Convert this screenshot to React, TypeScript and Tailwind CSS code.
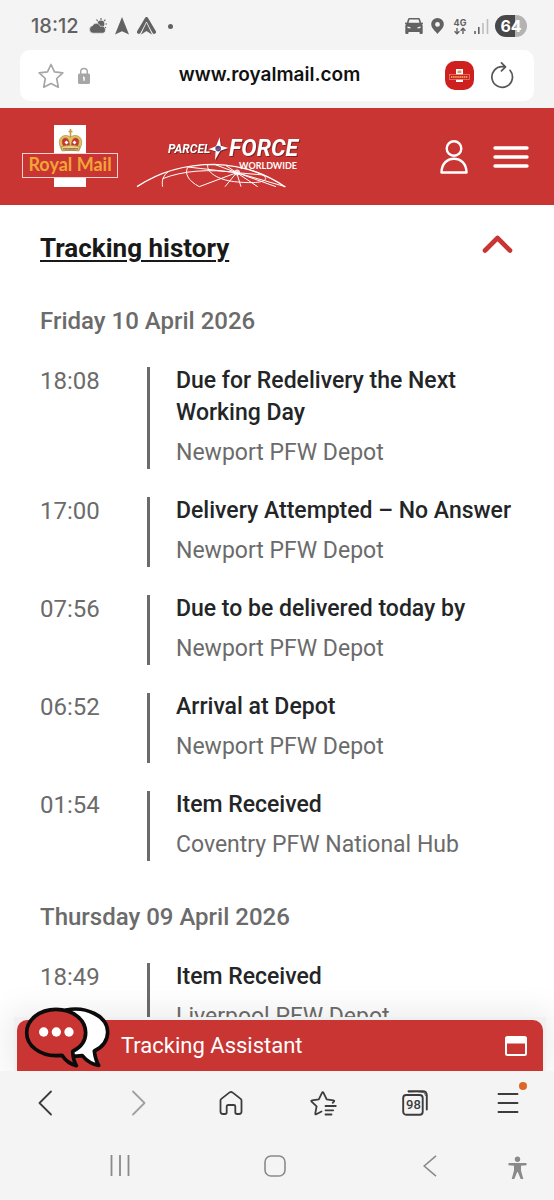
import React from "react";

type TrackingEvent = { time: string; title: string; place: string };
type TrackingDay = { date: string; events: TrackingEvent[] };

const days: TrackingDay[] = [
  {
    date: "Friday 10 April 2026",
    events: [
      { time: "18:08", title: "Due for Redelivery the Next Working Day", place: "Newport PFW Depot" },
      { time: "17:00", title: "Delivery Attempted – No Answer", place: "Newport PFW Depot" },
      { time: "07:56", title: "Due to be delivered today by", place: "Newport PFW Depot" },
      { time: "06:52", title: "Arrival at Depot", place: "Newport PFW Depot" },
      { time: "01:54", title: "Item Received", place: "Coventry PFW National Hub" },
    ],
  },
  {
    date: "Thursday 09 April 2026",
    events: [{ time: "18:49", title: "Item Received", place: "Liverpool PFW Depot" }],
  },
];

function StatusBar() {
  return (
    <div className="flex h-[50px] shrink-0 items-center justify-between pl-[31px] pr-[27px] pt-0.5 text-[#626262]">
      <div className="flex items-center">
        <span className="font-['Inter',sans-serif] text-xl font-medium">18:12</span>
        <svg className="ml-2.5" width="18" height="16" viewBox="0 0 18 16" fill="currentColor" aria-hidden="true">
          <circle cx="12" cy="6" r="3.4" />
          <path d="M12 0v2M7.500 1.500l1.200 1.600M16.400 1.600l-1.300 1.600M18 6h-1.600M17 10l-1-.8" stroke="currentColor" strokeWidth="1.100" />
          <path d="M4 15.200a3.800 3.800 0 0 1-.5-7.500A4.300 4.300 0 0 1 11.500 8.500a3.400 3.400 0 0 1 2.600 6.700z" stroke="#f4f4f4" strokeWidth=".6" />
        </svg>
        <svg className="ml-2" width="14" height="18" viewBox="0 0 14 18" fill="currentColor" aria-hidden="true">
          <path d="M7 0l7 17.500-7-3.300-7 3.300z" />
        </svg>
        <svg className="ml-2" width="19" height="19" viewBox="0 0 19 19" aria-hidden="true">
          <path d="M9.500 2L1.800 15M9.500 2l7.700 13" stroke="currentColor" strokeWidth="3.600" strokeLinecap="round" strokeLinejoin="round" />
          <path d="M9.500 5L16 18.500l-6.500-4-6.500 4z" fill="currentColor" stroke="#f4f4f4" strokeWidth=".8" />
        </svg>
        <span className="ml-3 size-[5px] rounded-full bg-[#626262]" />
      </div>
      <div className="flex items-center">
        <svg width="18" height="16" viewBox="0 0 18 16" fill="currentColor" aria-hidden="true">
          <path
            fillRule="evenodd"
            d="M4.300 0h9.400q1 0 1.300 1l1.200 3.800 1.100-.2q.7 0 .7.700t-.9 1.200q.6.600.6 1.600V15q0 1-1 1h-1.200q-1 0-1-1v-1H3.500v1q0 1-1 1H1.300q-1 0-1-1V8.100q0-1 .6-1.600Q0 6 0 5.300t.7-.7l1.100.2L3 1Q3.300 0 4.300 0zM4.500 1.400L3.500 4.800h11l-1-3.400zM2.500 8.500v1.600l3 .5V9.300zM15.500 8.500v1.600l-3 .5V9.300z"
          />
        </svg>
        <svg className="ml-2" width="13" height="16" viewBox="0 0 13 16" aria-hidden="true">
          <path fill="currentColor" fillRule="evenodd" d="M6.500 0A6.300 6.300 0 0 1 12.800 6.300C12.800 10.500 8 13.500 6.500 16 5 13.500.2 10.500.2 6.300A6.300 6.300 0 0 1 6.500 0zm0 4a2.400 2.400 0 1 0 0 4.800 2.400 2.400 0 0 0 0-4.800z" />
        </svg>
        <div className="ml-2 flex w-4 flex-col items-center">
          <span className="font-['Inter',sans-serif] text-[9px] leading-[9px] font-bold">4G</span>
          <svg width="12" height="8" viewBox="0 0 12 8" fill="none" stroke="currentColor" strokeWidth="1.400" aria-hidden="true">
            <path d="M3 1v5.500M.6 4.300L3 6.800l2.400-2.500M9 7V1.500M6.600 3.700L9 1.200l2.400 2.500" />
          </svg>
        </div>
        <svg className="ml-1.5" width="15" height="15" viewBox="0 0 15 15" aria-hidden="true">
          <path d="M1 12v3M4.800 8v7" stroke="currentColor" strokeWidth="1.600" />
          <path d="M9 4v11M13.500 0v15" stroke="#bdbdbd" strokeWidth="1.600" />
        </svg>
        <span className="ml-1.5 flex h-[22px] w-8 items-center justify-center rounded-full bg-linear-to-r from-[#484848] from-62% to-[#b3b3b3] to-62% font-['Inter',sans-serif] text-base font-bold text-white">
          64
        </span>
      </div>
    </div>
  );
}

function AddressBar() {
  return (
    <div className="mx-5 flex h-[51px] shrink-0 items-center rounded-[10px] bg-white pl-[18px] pr-5">
      <button aria-label="Bookmark" className="text-[#a6a6a6]">
        <svg width="26" height="26" viewBox="0 0 26 26" fill="none" stroke="currentColor" strokeWidth="1.700" strokeLinejoin="round">
          <path d="M13 1.500l3.500 7.300 8.300 1-6.100 5.700 1.600 8.700-7.300-3.800-7.300 3.800 1.600-8.700L1.200 9.800l8.300-1z" />
        </svg>
      </button>
      <svg className="ml-3.5" width="12" height="18" viewBox="0 0 12 18" aria-hidden="true">
        <path d="M2.700 8V4.800a3.300 3.300 0 0 1 6.600 0V8" fill="none" stroke="#a6a6a6" strokeWidth="1.400" />
        <rect y="6.500" width="12" height="10.500" rx="1.500" fill="#a6a6a6" />
        <path d="M6 10v3.800M5 10.300h1" stroke="#fff" strokeWidth="1.500" />
      </svg>
      <input
        aria-label="Web address"
        defaultValue="www.royalmail.com"
        className="mx-3 min-w-0 flex-1 bg-transparent pl-1 text-center font-['Inter',sans-serif] text-[19px] font-semibold text-[#111] outline-none"
      />
      <svg width="29" height="29" viewBox="0 0 29 29" aria-hidden="true">
        <rect width="29" height="29" rx="10" fill="#cf2020" />
        <path d="M11 8h7v13h-7z" fill="#fff" />
        <path d="M12.500 12l.2-2.500h3.600l.2 2.500z" fill="#c9a070" />
        <rect x="4.500" y="13.500" width="20" height="5" fill="#cf2020" stroke="#e58a80" strokeWidth=".7" />
        <path d="M6 16h17" stroke="#eb9a4b" strokeWidth="2" strokeDasharray="1.500 .6" />
      </svg>
      <button aria-label="Reload" className="ml-4 text-[#555]">
        <svg width="24" height="28" viewBox="0 0 24 28" fill="none" stroke="currentColor" strokeWidth="1.700" strokeLinecap="round" strokeLinejoin="round">
          <path d="M20 8.300A10.300 10.300 0 1 1 12.500 4.700h2.500M11.500 .9l4 3.900-4 4" />
        </svg>
      </button>
    </div>
  );
}

function RoyalMailLogo() {
  return (
    <svg width="97" height="64" viewBox="0 0 97 64" role="img" aria-label="Royal Mail">
      <path d="M32 0h32v62H32z" fill="#fff" />
      <g stroke="#8a6a34" strokeWidth=".5">
        <path d="M40 25.500C36 19 36.500 13 41 11c3-1.200 6-.5 7.500 1.500C50 10.500 53 9.800 56 11c4.500 2 5 8 1 14.500z" fill="#e3bf59" />
        <path d="M41.500 21c-2.500-4-1.500-8 2-8 2.500 0 4 3 4 7.500zM55.500 21c2.500-4 1.500-8-2-8-2.500 0-4 3-4 7.500z" fill="#cf2f35" />
        <path d="M39.500 21.500q9-2.500 18 0l-.7 4.500q-8.300-1.800-16.600 0z" fill="#ecd27c" />
      </g>
      <path d="M48.500 4v8M46.500 6.500h4" stroke="#c99a3c" strokeWidth="1.600" />
      <path d="M42.500 17.500l2-2 2 2-2 2zM50.500 17.500l2-2 2 2-2 2z" fill="#fff" />
      <path d="M41 23.800h15" stroke="#4f8b5b" strokeWidth="1.200" strokeDasharray="2 2" />
      <path d="M43 23.800h13" stroke="#c53a34" strokeWidth="1.200" strokeDasharray="2 2" />
      <rect x=".5" y="28.500" width="95" height="24" fill="#c83532" stroke="#f6d3d0" />
      <text x="48" y="46" textAnchor="middle" className="font-['Lato',sans-serif] text-[18px] font-bold" fill="#f2a535">
        Royal Mail
      </text>
    </svg>
  );
}

function ParcelforceLogo() {
  return (
    <svg width="170" height="56" viewBox="0 0 170 56" role="img" aria-label="Parcelforce Worldwide">
      <g transform="translate(-4 -14) scale(.3333)" fill="none" stroke="#fff" strokeWidth="3">
        <path d="M18 200C90 152 170 133 250 133c80 2 150 25 213 68" strokeWidth="4" />
        <path d="M95 200c-4-18 2-34 17-45M170 142c-9 18 0 40 35 58M230 135c-3 22 30 44 80 50 50 5 88 4 94-8 3-10-30-24-64-32" />
        <path d="M95 176c60-24 140-30 222-18M317 158L205 200M317 158l-35 42M317 158l13 42M317 158l63 42M317 158l118 42M317 158l146 42M317 158l-147-17M317 158l-67-25M317 158l-32-21M317 158l80 7" />
      </g>
      <circle cx="102" cy="38.500" r="3" fill="#fff" opacity=".8" />
      <g className="font-['Roboto',sans-serif] font-bold italic drop-shadow-[1px_1px_0_#7c2320]" fill="#fff">
        <text x="33" y="19" className="text-[12px]">PARCEL</text>
        <text x="94" y="22" className="text-[23px]">FORCE</text>
      </g>
      <text x="162" y="35" textAnchor="end" className="font-['Lato',sans-serif] text-[9px] font-bold" fill="#fff">
        WORLDWIDE
      </text>
      <path d="M84.700 3.300l1.100 8.500 7.500 2.200-7.900 2.800L80 26l.6-8.800-7.100-1.900 7.500-3.100z" fill="#fff" className="drop-shadow-[1px_1px_0_#7c2320]" />
      <circle cx="83.200" cy="14.600" r="2.800" fill="#4b4f92" />
      <path d="M81.500 15.500q2 1.500 3.500-1.500" stroke="#d34c50" fill="none" />
    </svg>
  );
}

function SiteHeader() {
  return (
    <header className="mt-[7px] flex h-[97px] shrink-0 items-center bg-[#c83532] pl-[22px] pr-[25px]">
      <a href="#royal-mail"><RoyalMailLogo /></a>
      <a href="#parcelforce" className="ml-4 mt-2.5"><ParcelforceLogo /></a>
      <button aria-label="Account" className="ml-auto">
        <svg width="28" height="34" viewBox="0 0 28 34" fill="none" stroke="#fff" strokeWidth="2.400" strokeLinejoin="round">
          <circle cx="14" cy="8.500" r="7.300" />
          <path d="M1.500 32.500C1.500 24 7 18.700 14 18.700S26.500 24 26.500 32.500z" />
        </svg>
      </button>
      <button aria-label="Menu" className="ml-[25px]">
        <svg width="36" height="24" viewBox="0 0 36 24" stroke="#fff" strokeWidth="3.400" strokeLinecap="round">
          <path d="M2 3h32M2 12h32M2 21h32" />
        </svg>
      </button>
    </header>
  );
}

function EventRow({ event }: { event: TrackingEvent }) {
  return (
    <li className="flex gap-[27px]">
      <time className="w-20 shrink-0 text-[24px] leading-7 text-[#6b6b6b]">{event.time}</time>
      <div className="flex-1 border-l-[3px] border-[#6b6b6b] pl-[26px] text-[23px]">
        <h3 className="-mt-0.5 font-medium text-[#232527]">{event.title}</h3>
        <p className="mt-2 text-[#6b6b6b]">{event.place}</p>
      </div>
    </li>
  );
}

function TrackingHistory() {
  return (
    <section className="pl-10 pr-6 pt-[27px] font-['Roboto',sans-serif] text-[24px] leading-8">
      <button className="flex w-full items-center justify-between pr-[17px] text-left">
        <span className="text-[26px] font-bold text-[#191919] underline decoration-2 underline-offset-3">Tracking history</span>
        <svg className="-mt-2" width="31" height="20" viewBox="0 0 31 20" fill="none" stroke="#c83532" strokeWidth="4.600" strokeLinecap="round" strokeLinejoin="round" aria-hidden="true">
          <path d="M3 16.500L15.500 4 28 16.500" />
        </svg>
      </button>
      <div className="mt-[41px] flex flex-col gap-10">
        {days.map((day) => (
          <div key={day.date}>
            <h2 className="font-medium text-[#6b6b6b]">{day.date}</h2>
            <ol className="mt-[30px] flex flex-col gap-7">
              {day.events.map((event) => (
                <EventRow key={event.time} event={event} />
              ))}
            </ol>
          </div>
        ))}
      </div>
    </section>
  );
}

function AssistantBar() {
  return (
    <div className="absolute right-2 bottom-0 left-3.5 bg-[#f0f0f0] px-[3px] pt-[3px] shadow-[0_0_32px_6px_rgba(0,0,0,0.08)]">
      <button className="relative flex h-[51px] w-full items-center justify-between rounded-t-[10px] bg-[#c83532] pl-[104px] pr-4 font-['Roboto',sans-serif] text-[22px] text-white">
        <svg className="absolute -top-3.5 left-[7px]" width="86" height="62" viewBox="72 48 258 186" stroke="#0b0b0b" strokeWidth="11" strokeLinejoin="round" aria-hidden="true">
          <path d="M198 60c60-12 125 18 125 66 0 27-17 46-40 57 2 17 6 31 13 43-20-3-36-13-49-29-42 6-84-10-84-66z" fill="#fff" />
          <path d="M168 58c50 0 89 31 89 70 0 25-15 44-39 56 1 17 4 31 11 43-18-4-32-14-43-31l-18 1c-50 0-88-31-88-69s38-70 88-70z" fill="#c83532" />
          <g fill="#fff" stroke="none">
            <circle cx="131" cy="126" r="14" />
            <circle cx="169" cy="126" r="14" />
            <circle cx="207" cy="126" r="14" />
          </g>
        </svg>
        <span>Tracking Assistant</span>
        <svg width="22" height="20" viewBox="0 0 22 20" aria-hidden="true">
          <rect x="1" y="1" width="20" height="18" rx="1.500" fill="none" stroke="#fff" strokeWidth="2" />
          <path d="M1 1h20v6.500H1z" fill="#fff" />
        </svg>
      </button>
    </div>
  );
}

function BrowserToolbar() {
  return (
    <nav aria-label="Browser" className="grid h-16 shrink-0 grid-cols-6 place-items-center text-[#3c3c3c]">
      <button aria-label="Back">
        <svg width="16" height="26" viewBox="0 0 16 26" fill="none" stroke="currentColor" strokeWidth="1.800" strokeLinecap="round" strokeLinejoin="round">
          <path d="M13 1.500L1.500 13 13 24.500" />
        </svg>
      </button>
      <button aria-label="Forward" className="text-[#a0a0a0]">
        <svg width="16" height="26" viewBox="0 0 16 26" fill="none" stroke="currentColor" strokeWidth="1.800" strokeLinecap="round" strokeLinejoin="round">
          <path d="M3 1.500L14.500 13 3 24.500" />
        </svg>
      </button>
      <button aria-label="Home">
        <svg width="24" height="26" viewBox="0 0 24 26" fill="none" stroke="currentColor" strokeWidth="1.800" strokeLinejoin="round">
          <path d="M1.500 10.500q0-1 .8-1.600L10.600 2.400q1.400-1 2.800 0L21.700 8.900q.8.600.8 1.600V21.500q0 2.500-2.500 2.500h-2q-1.700 0-1.700-1.700v-5.800q0-1.500-1.500-1.500H9.200q-1.500 0-1.500 1.500v5.800q0 1.700-1.700 1.700H4q-2.500 0-2.500-2.500z" />
        </svg>
      </button>
      <button aria-label="Bookmarks">
        <svg width="27" height="26" viewBox="0 0 27 26" fill="none" stroke="currentColor" strokeWidth="1.800" strokeLinecap="round" strokeLinejoin="round">
          <path d="M11.500 21.500l-5.200 2.700q-1.200.5-1-.8l1.300-7.100-5-4.700q-.9-1 .4-1.300l6.800-1 3.200-6.500q.8-1.200 1.500 0l3.200 6.500 6.800 1q1.300.3.400 1.300l-1.200 1.200M15.500 16h10.300M15.500 20.300h7.700M15.500 24.500h6" />
        </svg>
      </button>
      <button aria-label="98 open tabs" className="relative">
        <svg width="26" height="26" viewBox="0 0 26 26" fill="none" stroke="currentColor" strokeWidth="1.900" strokeLinecap="round">
          <rect x="1.200" y="5" width="19.500" height="19.800" rx="3" />
          <path d="M6.500 1.300h14q4.300 0 4.300 4.300V19.500" />
          <path d="M6.500 2q9-1 15 .5 1.500 1 2 3" strokeWidth=".8" />
        </svg>
        <span className="absolute bottom-1 left-0 w-[22px] text-center font-['Roboto',sans-serif] text-[13px] leading-[15px] font-medium">98</span>
      </button>
      <button aria-label="More" className="relative">
        <svg width="22" height="22" viewBox="0 0 22 22" stroke="currentColor" strokeWidth="1.900" strokeLinecap="round">
          <path d="M1.500 2h19M1.500 11h19M1.500 20h19" />
        </svg>
        <span className="absolute -top-2.5 -right-2 size-2 rounded-full bg-[#dd6526]" />
      </button>
    </nav>
  );
}

function SystemNavigation() {
  return (
    <nav aria-label="System" className="grid h-[65px] shrink-0 grid-cols-[42fr_155fr_155fr_155fr_46fr] items-center pb-1 text-[#8a8a8a]">
      <button aria-label="Recent apps" className="col-start-2 justify-self-center">
        <svg width="20" height="21" viewBox="0 0 20 21" stroke="currentColor" strokeWidth="1.800">
          <path d="M1.500 0v21M10 0v21M18.500 0v21" />
        </svg>
      </button>
      <button aria-label="Home screen" className="justify-self-center">
        <svg width="22" height="22" viewBox="0 0 22 22" fill="none" stroke="currentColor" strokeWidth="1.600">
          <rect x="1" y="1" width="20" height="20" rx="6" />
        </svg>
      </button>
      <button aria-label="Go back" className="justify-self-center">
        <svg width="14" height="22" viewBox="0 0 14 22" fill="none" stroke="currentColor" strokeWidth="1.600">
          <path d="M13 .8L1.200 11 13 21.200" />
        </svg>
      </button>
      <button aria-label="Accessibility" className="mt-1 justify-self-start">
        <svg width="19" height="24" viewBox="0 0 19 24" fill="currentColor">
          <circle cx="9.500" cy="3.200" r="2.700" />
          <path d="M.5 7h18v2.200l-5.500.6v4.800l2.300 8.400h-2.600L9.800 16h-.6l-2.900 7H3.700L6 14.600V9.800L.5 9.200z" />
        </svg>
      </button>
    </nav>
  );
}

export default function App() {
  return (
    <div className="flex h-screen flex-col overflow-hidden bg-[#f4f4f4]">
      <StatusBar />
      <AddressBar />
      <SiteHeader />
      <main className="relative min-h-0 flex-1 overflow-hidden bg-white">
        <TrackingHistory />
        <AssistantBar />
      </main>
      <BrowserToolbar />
      <SystemNavigation />
    </div>
  );
}
